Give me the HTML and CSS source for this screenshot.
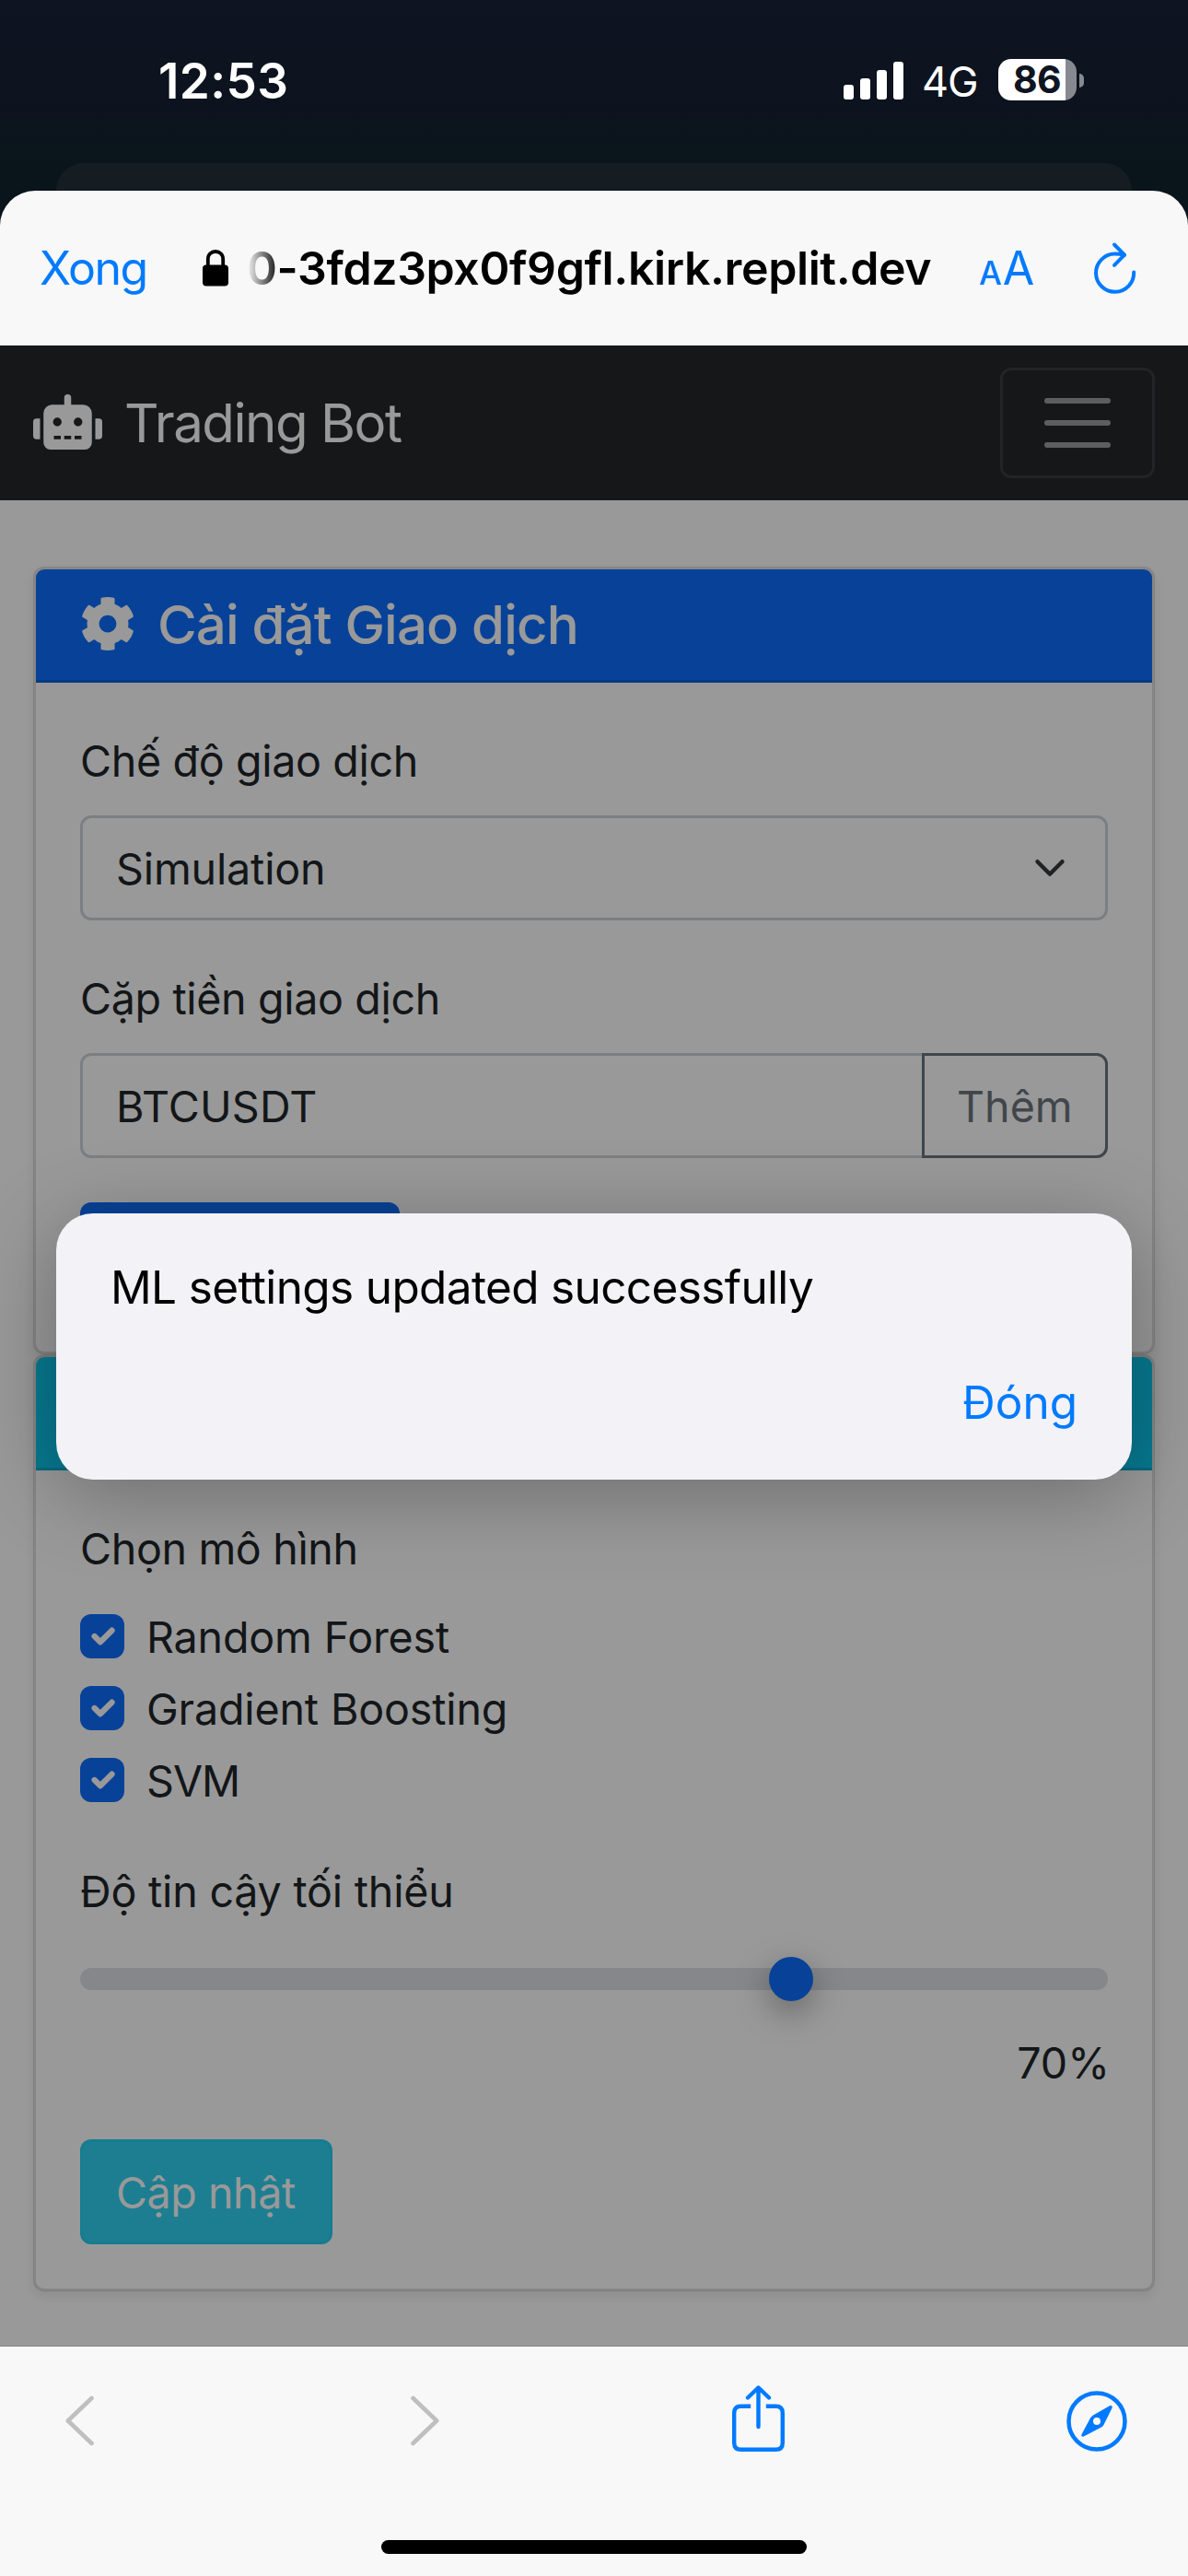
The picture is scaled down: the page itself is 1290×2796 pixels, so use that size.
FILE: index.html
```html
<!DOCTYPE html>
<html lang="vi">
<head>
<meta charset="utf-8">
<title>Trading Bot</title>
<link rel="stylesheet" href="styles.css">
</head>
<body>
<div class="screen">
  <div class="status">
    <span class="status-time">12:53</span>
    <div class="status-right">
      <svg class="signal" width="65" height="41" viewBox="0 0 65 41" fill="#fff"><rect y="25" width="11" height="16" rx="3"/><rect x="18" y="18" width="11" height="23" rx="3"/><rect x="36" y="9" width="11" height="32" rx="3"/><rect x="54" width="11" height="41" rx="3"/></svg>
      <span class="network">4G</span>
      <div class="battery"><span>86</span></div>
      <i class="battery-tip"></i>
    </div>
  </div>
  <div class="back-sheet"></div>

  <main class="sheet">
    <header class="address">
      <a class="done">Xong</a>
      <svg class="lock" width="28" height="40" viewBox="0 0 28 40"><path d="M5.8 18V10.500C5.800 5.200 9.300 2 14 2s8.200 3.200 8.200 8.500V18" fill="none" stroke="#000" stroke-width="3.800"/><rect y="16.500" width="28" height="23" rx="4" fill="#000"/></svg>
      <span class="url">0-3fdz3px0f9gfl.kirk.replit.dev</span>
      <span class="text-size"><small>A</small>A</span>
      <svg class="reload" width="48" height="58" viewBox="0 0 48 58" fill="none" stroke="#007aff" stroke-width="4" stroke-linecap="round" stroke-linejoin="round"><path d="M44.200 33.500A20.600 20.600 0 1 1 23.500 13.600q5 0 10.500 1.300"/><path d="M23 3.500L34 14.700 23 25.800"/></svg>
    </header>

    <div class="page">
      <nav class="navbar">
        <div class="brand">
          <svg width="75" height="60" viewBox="0 0 640 512" fill="#fff"><path d="M32,224H64V416H32A31.960,31.960,0,0,1,0,384V256A31.960,31.960,0,0,1,32,224Zm512-48V448a64.060,64.060,0,0,1-64,64H160a64.060,64.060,0,0,1-64-64V176a79.970,79.970,0,0,1,80-80H288V32a32,32,0,0,1,64,0V96H464A79.970,79.970,0,0,1,544,176ZM264,256a40,40,0,1,0-40,40A40,40,0,0,0,264,256Zm-8,128H192v32h64Zm96,0H288v32h64ZM456,256a40,40,0,1,0-40,40A40,40,0,0,0,456,256Zm-8,128H384v32h64ZM640,256V384a31.960,31.960,0,0,1-32,32H576V224h32A31.960,31.960,0,0,1,640,256Z"/></svg>
          <span>Trading Bot</span>
        </div>
        <div class="toggler"><svg width="90" height="90" viewBox="0 0 30 30" fill="none" stroke="#fff" stroke-opacity=".55" stroke-width="2" stroke-linecap="round"><path d="M4 7h22M4 15h22M4 23h22"/></svg></div>
      </nav>

      <section class="card">
        <div class="card-header primary">
          <svg width="60" height="60" viewBox="0 0 512 512" fill="#fff"><path d="M487.400 315.700l-42.600-24.600c4.300-23.200 4.300-47 0-70.200l42.600-24.600c4.900-2.800 7.100-8.600 5.500-14-11.100-35.600-30-67.800-54.700-94.600-3.800-4.100-10-5.100-14.800-2.300L380.800 110c-17.900-15.400-38.500-27.300-60.800-35.100V25.800c0-5.600-3.900-10.500-9.400-11.700-36.700-8.200-74.300-7.800-109.200 0-5.500 1.200-9.400 6.100-9.400 11.700V75c-22.200 7.900-42.800 19.800-60.800 35.100L88.700 85.500c-4.900-2.800-11-1.900-14.800 2.300-24.700 26.700-43.600 58.900-54.700 94.600-1.700 5.400.6 11.200 5.500 14L67.300 221c-4.300 23.200-4.300 47 0 70.200l-42.600 24.600c-4.900 2.800-7.100 8.600-5.500 14 11.100 35.600 30 67.800 54.700 94.600 3.800 4.100 10 5.100 14.800 2.300l42.600-24.600c17.900 15.400 38.500 27.300 60.800 35.100v49.200c0 5.600 3.900 10.500 9.400 11.700 36.700 8.200 74.300 7.800 109.200 0 5.500-1.200 9.400-6.100 9.400-11.700v-49.200c22.200-7.900 42.800-19.800 60.800-35.100l42.600 24.600c4.900 2.800 11 1.900 14.800-2.300 24.700-26.700 43.600-58.900 54.700-94.600 1.500-5.500-.7-11.300-5.600-14.100zM256 336c-44.100 0-80-35.900-80-80s35.900-80 80-80 80 35.900 80 80-35.900 80-80 80z"/></svg>
          <h5>Cài đặt Giao dịch</h5>
        </div>
        <div class="card-body">
          <label class="label tight">Chế độ giao dịch</label>
          <div class="control select"><span>Simulation</span><svg width="36" height="36" viewBox="0 0 16 16" fill="none" stroke="#343a40" stroke-width="2" stroke-linecap="round" stroke-linejoin="round"><path d="m2 5 6 6 6-6"/></svg></div>
          <label class="label tight">Cặp tiền giao dịch</label>
          <div class="input-group">
            <div class="control symbol">BTCUSDT</div>
            <div class="add">Thêm</div>
          </div>
          <div class="save"></div>
        </div>
      </section>

      <section class="card">
        <div class="card-header info"></div>
        <div class="card-body">
          <label class="label tight">Chọn mô hình</label>
          <div class="checks">
            <div class="check"><i><svg width="42" height="42" viewBox="0 0 20 20"><path d="m6 10 3 3 6-6"/></svg></i><span>Random Forest</span></div>
            <div class="check"><i><svg width="42" height="42" viewBox="0 0 20 20"><path d="m6 10 3 3 6-6"/></svg></i><span>Gradient Boosting</span></div>
            <div class="check svm"><i><svg width="42" height="42" viewBox="0 0 20 20"><path d="m6 10 3 3 6-6"/></svg></i><span>SVM</span></div>
          </div>
          <label class="label">Độ tin cậy tối thiểu</label>
          <div class="range"><div class="track"><div class="thumb"></div></div></div>
          <div class="percent">70%</div>
          <div class="update">Cập nhật</div>
        </div>
      </section>

      <div class="overlay">
        <div class="alert">
          <p>ML settings updated successfully</p>
          <a>Đóng</a>
        </div>
      </div>
    </div>

    <footer class="toolbar">
      <svg class="back" width="31" height="55" viewBox="0 0 31 55" fill="none" stroke="#bfbfbf" stroke-width="4.600" stroke-linecap="round" stroke-linejoin="round"><path d="M28.500 3L2.800 27.500 28.500 52"/></svg>
      <svg class="forward" width="31" height="55" viewBox="0 0 31 55" fill="none" stroke="#bfbfbf" stroke-width="4.600" stroke-linecap="round" stroke-linejoin="round"><path d="M2.500 3L28.200 27.500 2.500 52"/></svg>
      <svg class="share" width="57" height="73" viewBox="0 0 57 73" fill="none" stroke="#007aff" stroke-width="4.400" stroke-linecap="round" stroke-linejoin="round"><path d="M20.200 22.700H9.500q-7.300 0-7.300 7.300V62.500q0 7.300 7.300 7.300h38q7.300 0 7.300-7.300V30q0-7.300-7.300-7.300H36.800" stroke-linecap="butt"/><path d="M28.500 45V3M17 13.500L28.500 2.500 40 13.500"/></svg>
      <svg class="compass" width="66" height="66" viewBox="0 0 66 66"><circle cx="33" cy="33" r="30.500" fill="none" stroke="#007aff" stroke-width="4.500"/><path fill="#007aff" fill-rule="evenodd" d="M47 16.300c1.900-.8 3.400.7 2.500 2.500L40.700 36.500q-.8 1.900-2.800 2.900L18.800 49.600c-1.900.8-3.100-.7-2.300-2.300L26 29.600q1-2 3-3.200zM33 29a4 4 0 1 0 0 8 4 4 0 0 0 0-8z"/></svg>
      <div class="home-indicator"></div>
    </footer>
  </main>
</div>
</body>
</html>
```
FILE: styles.css
```css
* { box-sizing: border-box; }

body {
  margin: 0;
  font-family: Inter, "Liberation Sans", sans-serif;
  font-size: 46.6px;
  color: #212529;
}

svg { display: block; flex: none; }

.screen {
  width: 1290px;
  height: 2796px;
  overflow: hidden;
  display: flex;
  flex-direction: column;
  background: linear-gradient(#0e1421 0, #0c131e 120px, #0a151b 180px, #0a151b 260px);
}

/* Status bar */
.status {
  height: 177px;
  padding: 0 113px 2px 172px;
  display: flex;
  justify-content: space-between;
  align-items: center;
  color: #fff;
}
.status-time { font-size: 53px; font-weight: 600; letter-spacing: 0.4px; }
.status-right { display: flex; align-items: center; }
.signal { margin-top: -1px; }
.network { width: 82px; margin-left: 20px; padding-top: 2px; font-size: 45px; letter-spacing: -1.07px; }
.battery {
  width: 85px;
  height: 45px;
  margin: -2px 3px 0 1px;
  border-radius: 14px;
  background: linear-gradient(to right, #fff 73px, #868a90 73px);
  color: #0e1421;
  font-size: 41px;
  font-weight: 700;
  line-height: 45px;
  letter-spacing: -0.69px;
  padding-left: 16px;
}
.battery-tip { width: 5px; height: 15px; margin-top: -1px; border-radius: 0 5px 5px 0; background: #868a90; }

.back-sheet { height: 30px; margin: 0 61px; border-radius: 30px 30px 0 0; background: #151c22; }

.sheet {
  flex: 1;
  display: flex;
  flex-direction: column;
  border-radius: 38px 38px 0 0;
  overflow: hidden;
  background: #f8f8f8;
}

/* Address bar */
.address { height: 168px; padding: 0 55px 0 43px; display: flex; align-items: center; font-size: 50px; }
.done { width: 177px; color: #007aff; letter-spacing: -1.6px; }
.lock { margin-right: 20px; }
.url {
  width: 795px;
  color: #000;
  font-weight: 600;
  letter-spacing: -0.38px;
  -webkit-mask-image: linear-gradient(to right, transparent 0, #000 36px);
  mask-image: linear-gradient(to right, transparent 0, #000 36px);
}
.text-size { color: #007aff; letter-spacing: -1px; }
.text-size small { font-size: 35px; font-weight: 500; letter-spacing: 1px; }
.reload { margin-left: auto; }

/* Web page */
.page { position: relative; height: 2172px; background: #fff; border-bottom: 1px solid #888; }
.navbar {
  height: 168px;
  margin-bottom: 72px;
  padding: 0 36px;
  display: flex;
  align-items: center;
  justify-content: space-between;
  background: #23272a;
}
.brand { display: flex; align-items: center; gap: 24px; color: #fff; font-size: 58.2px; letter-spacing: -1.5px; }
.brand svg { margin-top: -3px; }
.toggler { padding: 12px 36px; border: 3px solid rgba(255, 255, 255, 0.1); border-radius: 12px; }

.card {
  margin: 0 36px;
  border: 3px solid rgba(0, 0, 0, 0.125);
  border-radius: 12px;
  background: #fff;
  background-clip: padding-box;
  box-shadow: 0 6px 12px rgba(0, 0, 0, 0.075);
}
.card-header {
  height: 123px;
  padding: 0 48px;
  display: flex;
  align-items: center;
  gap: 24px;
  border-bottom: 3px solid rgba(0, 0, 0, 0.125);
  border-radius: 9px 9px 0 0;
}
.primary { background: #0d6efd; }
.info { background: #0dcaf0; }
.card-header svg { margin-top: -3px; }
.card-header h5 { margin: -1px 0 0; color: #fff; font-size: 58.2px; font-weight: 500; letter-spacing: -0.85px; }
.card-body { padding: 48px; }

.label { display: block; height: 72px; padding-top: 1px; margin-bottom: 24px; line-height: 72px; letter-spacing: -0.2px; }
.label.tight { letter-spacing: -0.35px; }

.control {
  height: 114px;
  padding: 1px 36px 0;
  border: 3px solid #ced4da;
  border-radius: 12px;
  line-height: 108px;
}
.select { margin-bottom: 48px; padding-right: 42px; display: flex; justify-content: space-between; align-items: center; letter-spacing: -0.15px; }
.select svg { margin-top: -1px; }
.input-group { display: flex; margin-bottom: 48px; }
.symbol { flex: 1; border-right: 0; border-radius: 12px 0 0 12px; letter-spacing: 0.15px; }
.add {
  width: 202px;
  height: 114px;
  padding: 1px 0 0 35px;
  border: 3px solid #6c757d;
  border-radius: 0 12px 12px 0;
  color: #6c757d;
  line-height: 108px;
}
.save { width: 347px; height: 114px; border-radius: 12px; background: #0d6efd; }

.checks { margin-bottom: 48px; display: flex; flex-direction: column; gap: 6px; }
.check { height: 72px; display: flex; align-items: center; gap: 24px; line-height: 72px; letter-spacing: -0.16px; }
.check span { padding-top: 2px; }
.check i { width: 48px; height: 48px; padding: 3px; border-radius: 12px; background: #0d6efd; }
.check path { fill: none; stroke: #fff; stroke-width: 3; stroke-linecap: round; stroke-linejoin: round; }
.svm { letter-spacing: -1px; }

.range { height: 72px; margin-bottom: 18px; padding-top: 24px; }
.track { height: 24px; border-radius: 12px; background: #dee2e6; padding-left: 748px; }
.thumb {
  width: 48px;
  height: 48px;
  transform: translateY(-12px);
  border-radius: 50%;
  background: #0d6efd;
  box-shadow: 0 12px 36px rgba(0, 0, 0, 0.35);
}
.percent { height: 72px; padding-top: 1px; margin: 0 -2px 48px 0; line-height: 72px; text-align: right; }
.update {
  width: 274px;
  height: 114px;
  padding: 1px 36px 0;
  border: 3px solid #25cff2;
  border-radius: 12px;
  background: #31d2f2;
  color: #fff;
  line-height: 108px;
  letter-spacing: -0.45px;
}

/* Native alert over the dimmed page */
.overlay {
  position: absolute;
  inset: 0;
  display: flex;
  flex-direction: column;
  padding: 942px 61px 0;
  background: rgba(0, 0, 0, 0.4);
}
.alert {
  height: 289px;
  padding: 50px 59px 0 59px;
  display: flex;
  flex-direction: column;
  border-radius: 40px;
  background: #f2f2f7;
  box-shadow: 0 15px 90px rgba(0, 0, 0, 0.29);
  color: #000;
  font-size: 49.5px;
  line-height: 60px;
}
.alert p { margin: 0 0 65px; letter-spacing: -0.64px; }
.alert a { align-self: flex-end; color: #007aff; letter-spacing: 0; }

/* Bottom toolbar */
.toolbar { flex: 1; position: relative; display: flex; align-items: flex-start; padding: 0 65px 0 71px; }
.back, .forward { margin-top: 53px; }
.forward { margin-left: 344px; }
.share { margin: 42px 0 0 318px; }
.compass { margin: 48px 0 0 306px; }
.home-indicator {
  position: absolute;
  left: 414px;
  bottom: 24px;
  width: 462px;
  height: 15px;
  border-radius: 8px;
  background: #000;
}
```
